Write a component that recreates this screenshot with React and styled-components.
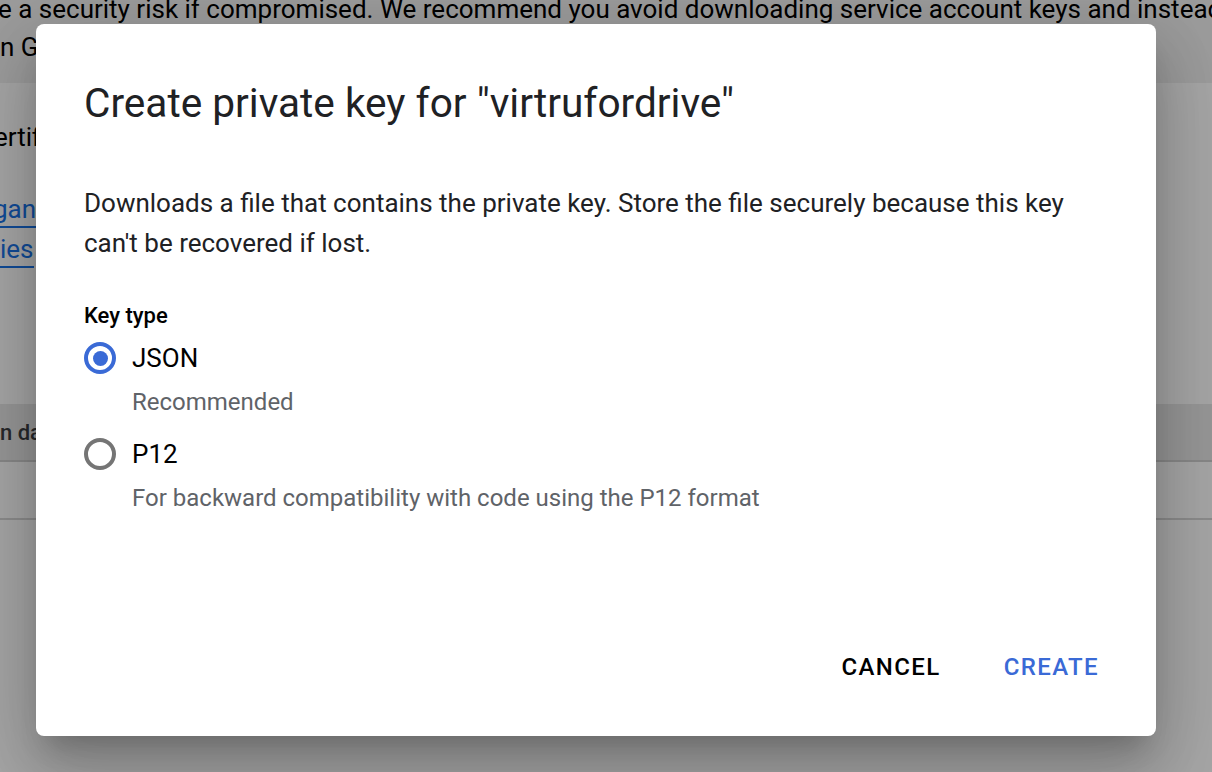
import React from "react";
import styled, { createGlobalStyle } from "styled-components";

const Global = createGlobalStyle`
  html, body { margin: 0; padding: 0; height: 100%; overflow: hidden; background: #fff; }
  body { font-family: Roboto, "Noto Sans", Arial, sans-serif; }
  #root { height: 100%; }
`;

const Page = styled.div`
  position: relative;
  height: 772px;
  overflow: hidden;
  font-size: 26px;
  color: #000;
`;

const Notice = styled.div`
  margin-top: -10px;
  background: #f0f0f0;
  padding: 0 0 17px 0;
`;

const Line = styled.div`
  white-space: nowrap;
  line-height: 38px;
  margin-left: ${(p) => p.$shift || 0}px;
`;

const Section = styled.div`
  padding: 34px 0 0 0;
  height: 321px;
  box-sizing: border-box;
`;

const Para = styled.div`
  white-space: nowrap;
  line-height: 40px;
  margin-left: ${(p) => p.$shift || 0}px;
  margin-bottom: ${(p) => p.$mb || 0}px;
`;

const Link = styled.a`
  color: #1a73e8;
  text-decoration: none;
  border-bottom: 2px solid #1a73e8;
  padding-bottom: 2px;
`;

const TableHead = styled.div`
  background: #e9e9e9;
  height: 56px;
  display: flex;
  align-items: center;
  font-size: 22px;
  font-weight: 500;
  color: #3c4043;
  white-space: nowrap;
  border-bottom: 2px solid #d2d2d2;
`;

const TableRow = styled.div`
  height: 56px;
  border-bottom: 2px solid #d8d8d8;
`;

const Scrim = styled.div`
  position: absolute;
  inset: 0;
  background: rgba(0, 0, 0, 0.35);
  display: flex;
  align-items: flex-start;
  justify-content: flex-start;
  padding: 24px 0 0 36px;
  box-sizing: border-box;
`;

const Dialog = styled.div`
  width: 1120px;
  height: 712px;
  background: #fff;
  border-radius: 8px;
  box-shadow: 0 19px 26px -12px rgba(0, 0, 0, 0.2),
    0 41px 65px 5px rgba(0, 0, 0, 0.14), 0 15px 78px 14px rgba(0, 0, 0, 0.12);
  display: flex;
  flex-direction: column;
  box-sizing: border-box;
  padding: 55px 41px 0 48px;
  color: #202124;
`;

const Title = styled.h1`
  margin: 0;
  font-size: 40.6px;
  line-height: 48px;
  font-weight: 400;
  color: #202124;
`;

const Body = styled.p`
  margin: 56px 0 0 0;
  font-size: 26px;
  line-height: 40px;
  color: #202124;
`;

const Label = styled.div`
  margin-top: 39px;
  font-size: 22px;
  line-height: 28px;
  font-weight: 500;
  color: #000;
`;

const Options = styled.div`
  display: flex;
  flex-direction: column;
  margin-top: 4px;
`;

const Option = styled.label`
  display: flex;
  flex-direction: column;
  margin-bottom: ${(p) => p.$mb || 0}px;
`;

const OptionRow = styled.div`
  display: flex;
  align-items: center;
  gap: 16px;
  height: 48px;
`;

const Radio = styled.span`
  width: 32px;
  height: 32px;
  box-sizing: border-box;
  border-radius: 50%;
  border: 4px solid ${(p) => (p.$checked ? "#3a6ad6" : "#757575")};
  display: flex;
  align-items: center;
  justify-content: center;
  &::after {
    content: "";
    width: 15px;
    height: 15px;
    border-radius: 50%;
    background: ${(p) => (p.$checked ? "#3a6ad6" : "transparent")};
  }
`;

const OptionText = styled.span`
  font-size: 26px;
  color: #000;
`;

const Hint = styled.div`
  margin-left: 48px;
  font-size: 24px;
  line-height: 40px;
  color: #5f6368;
`;

const Spacer = styled.div`
  flex: 1;
`;

const Actions = styled.div`
  display: flex;
  justify-content: flex-end;
  gap: 31px;
  padding: 0 0 45px 0;
`;

const Button = styled.button`
  border: none;
  background: none;
  font-family: inherit;
  font-size: 24px;
  font-weight: 500;
  letter-spacing: 1.4px;
  padding: 0 16px;
  height: 48px;
  color: ${(p) => (p.$primary ? "#3a6ad6" : "#000")};
  cursor: pointer;
`;

export default function App() {
  return (
    <>
      <Global />
      <Page>
        <Notice>
          <Line $shift={-2}>
            e a security risk if compromised. We recommend you avoid downloading service account keys and instead use Workload Identity Federation.
          </Line>
          <Line>n Google Cloud here.</Line>
        </Notice>
        <Section>
          <Para $shift={-6} $mb={32}>ertificate</Para>
          <Para $shift={-7}>
            <Link>ganization policies</Link>
          </Para>
          <Para>
            <Link>ies</Link>
          </Para>
        </Section>
        <TableHead>n date</TableHead>
        <TableRow />
        <Scrim>
          <Dialog role="dialog">
            <Title>Create private key for "virtrufordrive"</Title>
            <Body>
              Downloads a file that contains the private key. Store the file securely because this key
              <br />
              can't be recovered if lost.
            </Body>
            <Label>Key type</Label>
            <Options>
              <Option $mb={8}>
                <OptionRow>
                  <Radio $checked />
                  <OptionText>JSON</OptionText>
                </OptionRow>
                <Hint>Recommended</Hint>
              </Option>
              <Option>
                <OptionRow>
                  <Radio />
                  <OptionText>P12</OptionText>
                </OptionRow>
                <Hint>For backward compatibility with code using the P12 format</Hint>
              </Option>
            </Options>
            <Spacer />
            <Actions>
              <Button>CANCEL</Button>
              <Button $primary>CREATE</Button>
            </Actions>
          </Dialog>
        </Scrim>
      </Page>
    </>
  );
}
